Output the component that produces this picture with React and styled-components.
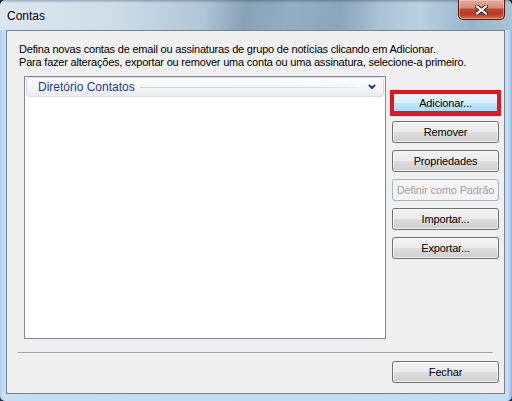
import React from "react";
import styled, { createGlobalStyle } from "styled-components";

const GlobalStyle = createGlobalStyle`
  html, body {
    margin: 0;
    padding: 0;
    background: #1f2b37;
  }
  body {
    font-family: "Liberation Sans", Arial, sans-serif;
  }
`;

const Window = styled.div`
  box-sizing: border-box;
  width: 512px;
  height: 401px;
  display: flex;
  flex-direction: column;
  border-radius: 6px 6px 5px 5px;
  overflow: hidden;
  background: linear-gradient(90deg, #a9cbeb 0px, #c6def5 2px, #c3dcf3 50%, #c6def5 calc(100% - 4px), #8fb4d8 100%);
`;

const TitleBar = styled.div`
  height: 30px;
  flex: none;
  display: flex;
  justify-content: space-between;
  align-items: flex-start;
  background:
    linear-gradient(180deg, rgba(40, 60, 80, 0.35) 0px, rgba(255, 255, 255, 0) 3px),
    linear-gradient(100deg, rgba(255, 255, 255, 0) 40%, rgba(60, 90, 115, 0.25) 48%, rgba(255, 255, 255, 0) 56%, rgba(60, 90, 115, 0.2) 66%, rgba(255, 255, 255, 0) 74%),
    linear-gradient(90deg, #dbe6ef 0%, #cfdde8 22%, #b3c8d8 38%, #93aec3 55%, #a2bccf 70%, #b9d0e0 82%, #98b6cb 92%, #a8c3d7 100%);
`;

const Title = styled.span`
  margin: 9px 0 0 7px;
  font-size: 12px;
  line-height: 14px;
  color: #000;
  text-shadow: 0 0 6px rgba(255, 255, 255, 0.9);
`;

const CloseButton = styled.div`
  box-sizing: border-box;
  width: 47px;
  height: 20px;
  margin-right: 7px;
  display: flex;
  align-items: center;
  justify-content: center;
  border: 1px solid #4a1a12;
  border-top: none;
  border-radius: 0 0 5px 5px;
  background: linear-gradient(180deg, #e3aa9d 0%, #d68c7c 40%, #c2452d 50%, #b93a22 75%, #d9704e 100%);
  box-shadow: inset 0 0 0 1px rgba(255, 220, 210, 0.45);
`;

const Client = styled.div`
  flex: 1;
  box-sizing: border-box;
  margin: 0 7px 7px 6px;
  display: flex;
  flex-direction: column;
  border: 1px solid #76828e;
  background: #f0f0f0;
`;

const Intro = styled.p`
  margin: 12px 0 0 12px;
  font-size: 11px;
  line-height: 13px;
  letter-spacing: -0.2px;
  color: #000;
`;

const Body = styled.div`
  display: flex;
  align-items: flex-start;
  margin: 7px 0 0 17px;
  gap: 6px;
`;

const ListBox = styled.div`
  box-sizing: border-box;
  width: 362px;
  height: 263px;
  padding: 0 1px;
  border: 1px solid #828790;
  background: #fff;
`;

const GroupHeader = styled.div`
  box-sizing: border-box;
  height: 20px;
  display: flex;
  align-items: center;
  gap: 5px;
  padding: 0 7px 0 11px;
  border: 1px solid #d8dde3;
  border-radius: 3px;
  background: linear-gradient(180deg, #fdfdfd 0%, #f3f4f5 60%, #eaecee 100%);
`;

const GroupName = styled.span`
  font-size: 12px;
  color: #1e3a8f;
  white-space: nowrap;
`;

const GroupRule = styled.div`
  flex: 1;
  height: 1px;
  background: linear-gradient(90deg, #c9d3e2 0%, #d3dcea 85%, rgba(211, 220, 234, 0) 100%);
`;

const ButtonColumn = styled.div`
  display: flex;
  flex-direction: column;
  gap: 7px;
  margin-top: 16px;
`;

const ButtonSlot = styled.div`
  position: relative;
`;

const Highlight = styled.div`
  position: absolute;
  top: -2px;
  left: -2px;
  right: -2px;
  bottom: -2px;
  border: 4px solid #e8131d;
  border-bottom-width: 5px;
  pointer-events: none;
`;

const Button = styled.button`
  box-sizing: border-box;
  display: block;
  width: 107px;
  height: 22px;
  padding: 0;
  border: 1px solid ${({ $hot }) => ($hot ? "#3c7fb1" : "#707070")};
  border-radius: 3px;
  font-family: "Liberation Sans", Arial, sans-serif;
  font-size: 11px;
  letter-spacing: -0.15px;
  color: #000;
  white-space: nowrap;
  overflow: hidden;
  background: ${({ $hot }) =>
    $hot
      ? "linear-gradient(180deg, #eaf6fd 0%, #d9f0fc 50%, #bee6fd 50%, #a7d9f5 100%)"
      : "linear-gradient(180deg, #f2f2f2 0%, #ebebeb 50%, #dddddd 50%, #cfcfcf 100%)"};
  box-shadow: inset 0 0 0 1px rgba(255, 255, 255, 0.7);

  &:disabled {
    border-color: #adb2b5;
    background: #f4f4f4;
    color: #a3a3a3;
    box-shadow: none;
  }
`;

const Separator = styled.div`
  margin: 13px 11px 0 11px;
  height: 0;
  border-top: 1px solid #a0a0a0;
  border-bottom: 1px solid #fff;
`;

const Footer = styled.div`
  display: flex;
  justify-content: flex-end;
  padding: 7px 5px 0 0;
`;

function CloseGlyph() {
  return (
    <svg width="13" height="10" viewBox="0 0 13 10">
      <path d="M2 1.5 L11 8.5 M11 1.5 L2 8.5" stroke="#3a1a14" strokeWidth="4" strokeLinecap="square" />
      <path d="M2 1.5 L11 8.5 M11 1.5 L2 8.5" stroke="#fff" strokeWidth="2.2" strokeLinecap="square" />
    </svg>
  );
}

function Chevron() {
  return (
    <svg width="8" height="6" viewBox="0 0 8 6">
      <path d="M1 1 L4 4 L7 1" fill="none" stroke="#1e3a8f" strokeWidth="2" />
    </svg>
  );
}

const actions = [
  { label: "Adicionar...", hot: true },
  { label: "Remover" },
  { label: "Propriedades" },
  { label: "Definir como Padrão", disabled: true },
  { label: "Importar..." },
  { label: "Exportar..." },
];

export default function App() {
  return (
    <>
      <GlobalStyle />
      <Window>
        <TitleBar>
          <Title>Contas</Title>
          <CloseButton>
            <CloseGlyph />
          </CloseButton>
        </TitleBar>
        <Client>
          <Intro>
            Defina novas contas de email ou assinaturas de grupo de notícias clicando em Adicionar.
            <br />
            Para fazer alterações, exportar ou remover uma conta ou uma assinatura, selecione-a primeiro.
          </Intro>
          <Body>
            <ListBox>
              <GroupHeader>
                <GroupName>Diretório Contatos</GroupName>
                <GroupRule />
                <Chevron />
              </GroupHeader>
            </ListBox>
            <ButtonColumn>
              {actions.map((a) => (
                <ButtonSlot key={a.label}>
                  <Button $hot={a.hot} disabled={a.disabled}>
                    {a.label}
                  </Button>
                  {a.hot && <Highlight />}
                </ButtonSlot>
              ))}
            </ButtonColumn>
          </Body>
          <Separator />
          <Footer>
            <Button>Fechar</Button>
          </Footer>
        </Client>
      </Window>
    </>
  );
}
